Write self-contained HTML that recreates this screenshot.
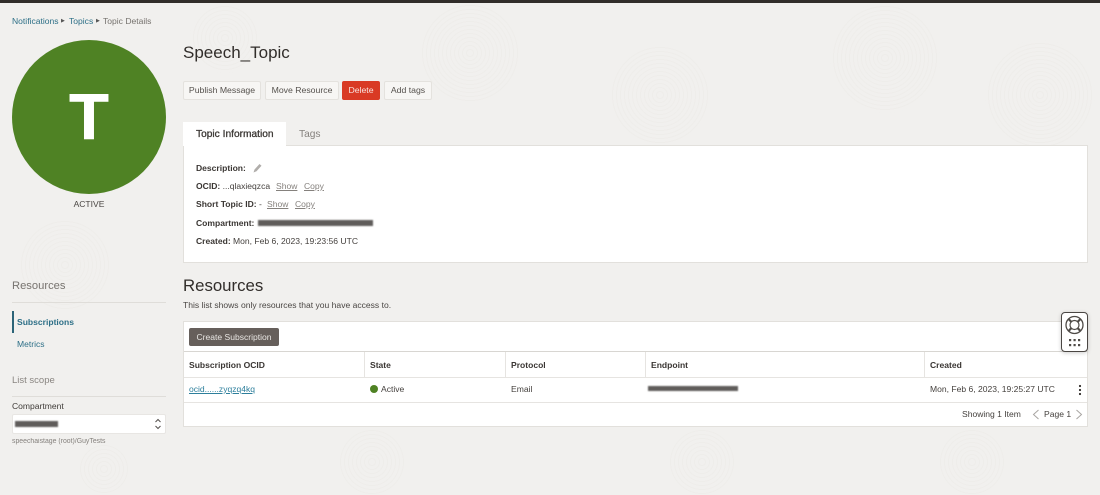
<!DOCTYPE html>
<html><head><meta charset="utf-8"><style>
html,body{margin:0;padding:0;width:1100px;height:495px;overflow:hidden}
body{background:#f1f0ee;font-family:"Liberation Sans",sans-serif;font-size:8.55px;color:#45413e}
#w{position:relative;width:1100px;height:495px;overflow:hidden}
.t{position:absolute;white-space:nowrap;line-height:12px;filter:blur(.3px)}
.b{position:absolute;box-sizing:border-box;background:#f7f6f4;border:1px solid #e4e2de;border-radius:2px;color:#55514d;text-align:center;height:19px;top:81px;line-height:17px;font-size:8.7px;filter:blur(.2px)}
.box{position:absolute;box-sizing:border-box}
.lnk{position:absolute;top:0;color:#85817d;text-decoration:underline}
.h{font-weight:bold;color:#3a3633}
.blk{position:absolute;background:#5f5c5a;filter:blur(.8px)}
.ln{position:absolute;background:#e6e4e1}
.c{position:absolute;border-radius:50%;background:repeating-radial-gradient(circle,#f1f0ee 0 3px,#eeedea 3px 4px)}
</style></head><body><div id="w">
<div class="c" style="left:610px;top:45px;width:100px;height:100px"></div>
<div class="c" style="left:830px;top:3px;width:110px;height:110px"></div>
<div class="c" style="left:985px;top:40px;width:110px;height:110px"></div>
<div class="c" style="left:190px;top:3px;width:70px;height:70px"></div>
<div class="c" style="left:420px;top:3px;width:100px;height:100px"></div>
<div class="c" style="left:340px;top:430px;width:64px;height:64px"></div>
<div class="c" style="left:670px;top:430px;width:64px;height:64px"></div>
<div class="c" style="left:940px;top:430px;width:64px;height:64px"></div>
<div class="c" style="left:20px;top:220px;width:90px;height:90px"></div>
<div class="c" style="left:80px;top:445px;width:48px;height:48px"></div>
<div class="box" style="left:0;top:0;width:1100px;height:3px;background:#312d2a"></div>

<div class="t" style="left:12px;top:15px;color:#2d6f87">Notifications</div>
<div class="t" style="left:61px;top:15px;font-size:5px;color:#555">&#9654;</div>
<div class="t" style="left:69px;top:15px;color:#2d6f87">Topics</div>
<div class="t" style="left:96px;top:15px;font-size:5px;color:#555">&#9654;</div>
<div class="t" style="left:103px;top:15px;color:#76726e">Topic Details</div>

<div class="box" style="left:12px;top:40px;width:154px;height:154px;border-radius:50%;background:#4f8224"></div>
<div class="t" style="left:12px;top:41px;width:154px;height:152px;line-height:152px;text-align:center;font-size:65px;font-weight:bold;color:#fff;filter:none;-webkit-text-stroke:.6px #fff">T</div>
<div class="t" style="left:12px;top:198px;width:154px;text-align:center;color:#4a4643">ACTIVE</div>

<div class="t" style="left:183px;top:42px;font-size:17px;line-height:21px;color:#312d2a">Speech_Topic</div>

<div class="b" style="left:183px;width:78px">Publish Message</div>
<div class="b" style="left:265px;width:74px">Move Resource</div>
<div class="b" style="left:342px;width:38px;background:#d93a24;border-color:#d93a24;color:#f8e4df">Delete</div>
<div class="b" style="left:384px;width:48px">Add tags</div>

<div class="box" style="left:183px;top:145px;width:905px;height:118px;background:#fff;border:1px solid #e2e0dc"></div>
<div class="box" style="left:183px;top:122px;width:103px;height:24px;background:#fff"></div>
<div class="t" style="left:196px;top:128.500px;font-size:10.200px;color:#3a3633;-webkit-text-stroke:.3px #3a3633">Topic Information</div>
<div class="t" style="left:299px;top:128.500px;font-size:10.200px;color:#85817d">Tags</div>

<div class="t" style="left:196px;top:162px"><span class="h">Description:</span></div>
<svg class="box" style="left:252px;top:162px" width="11" height="12" viewBox="0 0 11 12"><path d="M1.500 10.500l1-3 5-5.500 2 1.800-5 5.500z" fill="#b0adaa"/></svg>
<div class="t" style="left:196px;top:180px;width:200px;height:12px"><span class="h">OCID:</span> ...qlaxieqzca<span class="lnk" style="left:80px">Show</span><span class="lnk" style="left:108px">Copy</span></div>
<div class="t" style="left:196px;top:198px;width:200px;height:12px"><span class="h">Short Topic ID:</span> -<span class="lnk" style="left:71px">Show</span><span class="lnk" style="left:99px">Copy</span></div>
<div class="t" style="left:196px;top:217px"><span class="h">Compartment:</span></div>
<div class="blk" style="left:258px;top:220px;width:115px;height:6px"></div>
<div class="t" style="left:196px;top:235px"><span class="h">Created:</span> Mon, Feb 6, 2023, 19:23:56 UTC</div>

<div class="t" style="left:183px;top:275px;font-size:16.800px;line-height:21px;color:#312d2a">Resources</div>
<div class="t" style="left:183px;top:299px;color:#4a4643">This list shows only resources that you have access to.</div>

<div class="box" style="left:183px;top:321px;width:905px;height:106px;background:#fff;border:1px solid #e2e0dc"></div>
<div class="box" style="left:189px;top:328px;width:90px;height:18px;background:#665f5b;border-radius:2px"></div>
<div class="t" style="left:189px;top:331px;width:90px;text-align:center;color:#e8e6e3">Create Subscription</div>
<div class="ln" style="left:184px;top:351px;width:903px;height:1px;background:#d8d6d2"></div>
<div class="ln" style="left:184px;top:377px;width:903px;height:1px"></div>
<div class="ln" style="left:184px;top:402px;width:903px;height:1px"></div>
<div class="ln" style="left:364px;top:352px;width:1px;height:25px"></div>
<div class="ln" style="left:505px;top:352px;width:1px;height:25px"></div>
<div class="ln" style="left:645px;top:352px;width:1px;height:25px"></div>
<div class="ln" style="left:924px;top:352px;width:1px;height:25px"></div>
<div class="t h" style="left:189px;top:359px">Subscription OCID</div>
<div class="t h" style="left:370px;top:359px">State</div>
<div class="t h" style="left:511px;top:359px">Protocol</div>
<div class="t h" style="left:651px;top:359px">Endpoint</div>
<div class="t h" style="left:930px;top:359px">Created</div>
<div class="t" style="left:189px;top:383px;color:#2d7f9c;text-decoration:underline">ocid......zyqzq4kq</div>
<div class="box" style="left:370px;top:385px;width:8px;height:8px;border-radius:50%;background:#4f8224"></div>
<div class="t" style="left:381px;top:383px">Active</div>
<div class="t" style="left:511px;top:383px">Email</div>
<div class="blk" style="left:648px;top:386px;width:90px;height:5px"></div>
<div class="t" style="left:930px;top:383px">Mon, Feb 6, 2023, 19:25:27 UTC</div>
<svg class="box" style="left:1078px;top:384px" width="4" height="12"><circle cx="2" cy="2" r="1.100" fill="#312d2a"/><circle cx="2" cy="6" r="1.100" fill="#312d2a"/><circle cx="2" cy="10" r="1.100" fill="#312d2a"/></svg>
<div class="t" style="left:962px;top:408px">Showing 1 Item</div>
<div class="t" style="left:1044px;top:408px">Page 1</div>
<svg class="box" style="left:1032px;top:409px" width="8" height="11" fill="none" stroke="#a8a5a2"><path d="M6.500 1L1.500 5.500l5 4.500"/></svg>
<svg class="box" style="left:1075px;top:409px" width="8" height="11" fill="none" stroke="#a8a5a2"><path d="M1.500 1l5 4.500-5 4.500"/></svg>

<div class="t" style="left:12px;top:279px;font-size:11.200px;line-height:14px;color:#77736f">Resources</div>
<div class="ln" style="left:12px;top:302px;width:154px;height:1px;background:#dfddd9"></div>
<div class="box" style="left:12px;top:311px;width:1.500px;height:22px;background:#2c6478"></div>
<div class="t" style="left:17px;top:316px;color:#2d6f87;font-weight:bold">Subscriptions</div>
<div class="t" style="left:17px;top:338px;color:#2d6f87">Metrics</div>
<div class="t" style="left:12px;top:374.500px;font-size:9.500px;color:#8a8682">List scope</div>
<div class="ln" style="left:12px;top:396px;width:154px;height:1px;background:#dfddd9"></div>
<div class="t" style="left:12px;top:400px;color:#3f3b38">Compartment</div>
<div class="box" style="left:12px;top:414px;width:154px;height:20px;background:#fff;border:1px solid #e8e6e3;border-radius:2px"></div>
<div class="blk" style="left:15px;top:421px;width:43px;height:6px"></div>
<svg class="box" style="left:154px;top:417px" width="8" height="14" fill="none" stroke="#55514e" stroke-width="1"><path d="M1.500 5L4 2.500 6.500 5M1.500 9L4 11.500 6.500 9"/></svg>
<div class="t" style="left:12px;top:436px;font-size:6.900px;color:#85817d">speechaistage (root)/GuyTests</div>

<div class="box" style="left:1061px;top:312px;width:27px;height:40px;background:#fff;border:1px solid #4a4643;border-radius:4px;box-shadow:0 1px 4px rgba(0,0,0,.2)"></div>
<svg class="box" style="left:1061px;top:312px" width="27" height="40" fill="none" stroke="#4f4b47">
<circle cx="13.500" cy="13" r="8.500" stroke-width="1.300"/><circle cx="13.500" cy="13" r="4.500" stroke-width="1.200"/>
<path d="M7.500 7l3 3M19.500 7l-3 3M7.500 19l3-3M19.500 19l-3-3" stroke-width="2.200"/>
<g fill="#4f4b47" stroke="none"><rect x="8" y="27" width="2.200" height="2.200"/><rect x="12.500" y="27" width="2.200" height="2.200"/><rect x="17" y="27" width="2.200" height="2.200"/><rect x="8" y="32" width="2.200" height="2.200"/><rect x="12.500" y="32" width="2.200" height="2.200"/><rect x="17" y="32" width="2.200" height="2.200"/></g>
</svg>
</div></body></html>
